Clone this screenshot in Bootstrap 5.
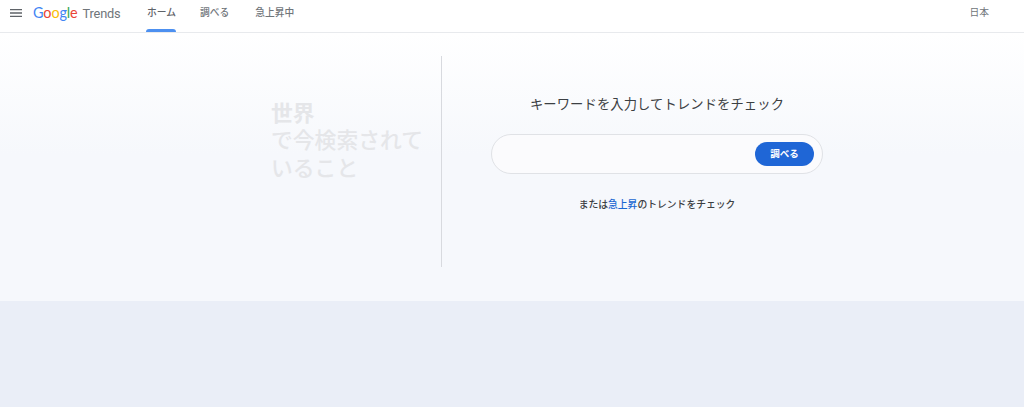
<!DOCTYPE html>
<html lang="ja">
<head>
<meta charset="utf-8">
<title>Google Trends</title>
<link href="https://cdn.jsdelivr.net/npm/bootstrap@5.3.0/dist/css/bootstrap.min.css" rel="stylesheet">
<style>
html,body{height:100%;}
body{background:#eaeef7;font-family:"Roboto","Noto Sans CJK JP",sans-serif;overflow:hidden;}
.topbar{height:33px;background:#fff;border-bottom:1px solid #e8eaed;}
.menu-ico{width:12px;height:8px;margin:9px 0 0 10px;display:block;flex:none;}
.logo{margin-left:11px;width:113px;flex:none;line-height:26px;white-space:nowrap;color:#70757a;}
.logo-mark{font-family:"Lato","Open Sans",sans-serif;font-size:14.4px;letter-spacing:-.1px;margin-right:5px;}
.logo-name{font-size:12.8px;letter-spacing:-.2px;}
.logo .g1{color:#4285f4}.logo .g2{color:#ea4335}.logo .g3{color:#fbbc05}.logo .g4{color:#34a853}
.tab-item{position:relative;font-size:9.75px;font-weight:500;color:#70757a;line-height:25px;height:32px;padding:0 0 0 1px;}
.tab-item.on{width:30px;margin-right:23px;color:#5f6368;}
.tab-mid{margin-right:25px;}
.tab-item.on::after{content:"";position:absolute;left:0;right:0;bottom:0;height:3px;background:#4d90f0;border-radius:3px 3px 0 0;}
.region{font-size:9.75px;line-height:25px;color:#70757a;margin-right:35px;}
.hero{height:268px;background:linear-gradient(#fff,#f6f8fc 45%);}
.hero-left{width:441px;padding:67px 0 0 271px;}
.hero-title{font-size:21.8px;line-height:27.3px;font-weight:500;color:#e5e6e9;margin:0;width:165px;}
.hero-title b{font-weight:700;}
.hero-rule{width:1px;height:211px;background:#d8dadf;margin-top:23px;flex:none;}
.hero-right{width:332px;margin-left:49px;padding-top:62px;}
.hero-head{font-size:13.3px;line-height:20px;color:#3c4043;font-weight:400;margin:0 0 19px;text-align:center;letter-spacing:.1px;}
.search-shell{height:40px;border:1px solid #e0e2e6;border-radius:20px;background:#fbfbfd;padding:0 8px 0 16px;}
.search-input{border:0;background:transparent;outline:0;flex:1;min-width:0;}
.search-btn{width:59px;height:24px;line-height:24px;padding:0;border:0;border-radius:12px;background:#1f66d6;color:#fff;font-size:9.5px;font-weight:700;}
.hero-note{font-size:9.8px;line-height:14px;font-weight:500;color:#3c4043;text-align:center;margin:24px 0 0;}
.hero-note a{color:#1967d2;text-decoration:none;}
</style>
</head>
<body>
<header class="topbar d-flex align-items-start">
  <svg class="menu-ico" viewBox="0 0 12 8" aria-hidden="true"><path d="M0 .7h12M0 4h12M0 7.3h12" stroke="#5f6368" stroke-width="1.3" fill="none"/></svg>
  <div class="logo"><span class="logo-mark"><span class="g1">G</span><span class="g2">o</span><span class="g3">o</span><span class="g1">g</span><span class="g4">l</span><span class="g2">e</span></span><span class="logo-name">Trends</span></div>
  <nav class="d-flex">
    <span class="tab-item on">ホーム</span>
    <span class="tab-item tab-mid">調べる</span>
    <span class="tab-item">急上昇中</span>
  </nav>
  <span class="region ms-auto">日本</span>
</header>
<main class="hero d-flex">
  <div class="hero-left flex-shrink-0 d-flex">
    <h1 class="hero-title"><b>世界</b><br>で今検索されて<br>いること</h1>
  </div>
  <div class="hero-rule"></div>
  <section class="hero-right">
    <h2 class="hero-head">キーワードを入力してトレンドをチェック</h2>
    <form class="search-shell d-flex align-items-center" onsubmit="return false">
      <input class="search-input" type="text" aria-label="検索">
      <button class="search-btn btn" type="submit">調べる</button>
    </form>
    <p class="hero-note">または<a href="#">急上昇</a>のトレンドをチェック</p>
  </section>
</main>
</body>
</html>
